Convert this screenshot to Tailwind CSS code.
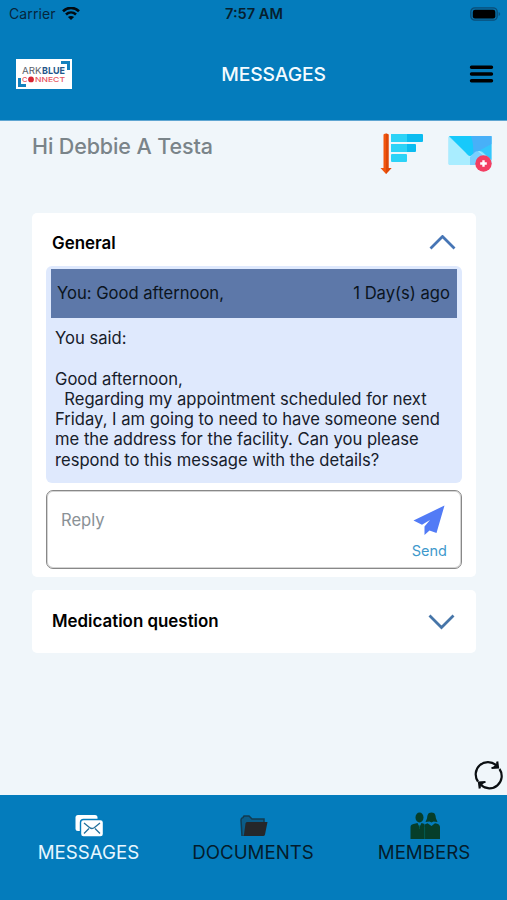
<!DOCTYPE html>
<html lang="en">
<head>
    <meta charset="UTF-8">
    <meta name="viewport" content="width=device-width, initial-scale=1.0">
    <title>Messages</title>
    <script src="https://cdn.jsdelivr.net/npm/@tailwindcss/browser@4"></script>
    <style>
        body {
            font-family: Inter, "Liberation Sans", sans-serif;
        }
    </style>
</head>
<body>
    <div class="flex h-[900px] w-[507px] flex-col overflow-hidden bg-[#f0f6fa] text-[#0b1420]">
        <header class="h-[121px] shrink-0 border-b border-[#5fa6d2] bg-[#047cbc]">
            <!-- Status bar -->
            <div class="grid h-7 grid-cols-3 items-center pl-[9px] pr-[8px] text-[14px] leading-7">
                <div class="flex items-center gap-[6px] text-[#06263c]">
                    <span class="tracking-[0.1px]">Carrier</span>
                    <svg class="h-[14px] w-[18px]" viewBox="0 0 18 14" fill="none" stroke="#020a10" stroke-width="2.6">
                        <path d="M1 4.2C5.6-.2 12.4-.2 17 4.2"/>
                        <path d="M4 7.500c2.900-2.700 7.100-2.700 10 0"/>
                        <path d="M9 13.100L5.900 10C7.600 8.500 10.400 8.500 12.100 10z" fill="#020a10" stroke="none"/>
                    </svg>
                </div>
                <span class="text-center text-[14.600px] font-semibold text-[#06202f]">7:57 AM</span>
                <svg class="mr-[-2px] h-[14px] w-[31px] justify-self-end" viewBox="0 0 31 14">
                    <rect x=".8" y=".8" width="26.400" height="12.400" rx="4" fill="#0772ac" stroke="#0a4e78" stroke-width="1.300"/>
                    <rect x="2.800" y="2.700" width="22.500" height="8.800" rx="2.200" fill="#000"/>
                    <path d="M28.600 5v4q1.600-.7 1.600-2t-1.600-2z" fill="#0a5480"/>
                </svg>
            </div>
            <!-- Title bar -->
            <div class="grid h-[92px] grid-cols-[56px_1fr_25px] items-center pl-[16px] pr-[13px]">
                <div class="relative h-[30px] w-[56px] bg-white">
                    <svg class="absolute inset-0 h-[30px] w-[56px]" viewBox="0 0 56 30" fill="#1481be">
                        <path d="M45 2h9v9h-3V5h-6z"/>
                        <path d="M2 19h3v6h5v3H2z"/>
                        <text x="6" y="14.800" font-size="9.600" textLength="19.500" lengthAdjust="spacingAndGlyphs" fill="#59616b">ARK</text>
                        <text x="26" y="14.800" font-size="9.600" font-weight="700" textLength="23" lengthAdjust="spacingAndGlyphs" fill="#22568a">BLUE</text>
                        <text x="6" y="23" font-size="6.600" font-weight="500" textLength="5.500" lengthAdjust="spacingAndGlyphs" fill="#e75560">C</text>
                        <circle cx="15" cy="20.400" r="2.900" fill="#d82432"/>
                        <text x="19" y="23" font-size="6.600" font-weight="500" textLength="30" lengthAdjust="spacingAndGlyphs" fill="#e75560">NNECT</text>
                    </svg>
                </div>
                <h1 class="pl-[6px] text-center text-[19.300px] font-medium leading-6 tracking-[-0.100px] text-[#f3fbff]">MESSAGES</h1>
                <svg class="h-[20px] w-[25px]" viewBox="0 0 25 20" stroke="#000" stroke-width="3.400" stroke-linecap="round">
                    <path d="M2.500 3.300h20M2.500 10h20M2.500 16.700h20"/>
                </svg>
            </div>
        </header>

        <main class="flex grow flex-col pl-8 pr-[31px]">
            <div class="mr-[-17px] flex h-[92px] items-start">
                <h2 class="mt-[11px] grow whitespace-nowrap text-[21.500px] font-medium leading-7 tracking-[-0.120px] text-[#7a8489]">Hi Debbie A Testa</h2>
                <svg class="mt-[12px] h-[42px] w-[44px]" viewBox="0 0 44 42">
                    <path d="M3.500 1.500Q6-.3 8.500 1.500V35h3L6 41 .5 35h3z" fill="#f1550d"/>
                    <path d="M6 .700Q7.500.5 8.500 1.500V35h3L6 41z" fill="#dd4709"/>
                    <rect x="11" y="1" width="32" height="8" rx="1" fill="#0bbcf0"/>
                    <rect x="11" y="11" width="25" height="8" rx="1" fill="#0bbcf0"/>
                    <path d="M12 1h15v8H12q-1 0-1-1V2q0-1 1-1zM12 11h15v8H12q-1 0-1-1v-6q0-1 1-1z" fill="#2cd3f7"/>
                    <rect x="11" y="21" width="16" height="8" rx="1" fill="#2cd3f7"/>
                </svg>
                <svg class="ml-[24px] mt-[14px] h-[38px] w-[45px]" viewBox="0 0 45 38">
                    <rect x=".5" y="1" width="43" height="29" rx="1.500" fill="#83e2ff"/>
                    <path d="M1 2l18 16L2 30H1z" fill="#a9edff"/>
                    <path d="M1 29.500L13 18q2-1.500 4 0l4 3 6-5q2-1.500 4 0l12 9v5H2z" fill="#a9edff"/>
                    <path d="M43.500 1v24l-9-8q-3-2-6 0L22 21z" fill="#34c6fb"/>
                    <path d="M1 1h42L24 20q-2 2-4 0z" fill="#17c9fb"/>
                    <path d="M23 1h20.500v8L25 19q1-9-2-18z" fill="#48b0f8"/>
                    <path d="M22 22l5-5q2-1.500 4 0l12 9v4H22z" fill="#79d0ff"/>
                    <circle cx="35.500" cy="28.500" r="8.200" fill="#f33e62"/>
                    <path d="M35.500 25.200v6.600M32.200 28.500h6.600" stroke="#fff" stroke-width="2.400"/>
                </svg>
            </div>

            <section class="h-[364px] rounded-[5px] bg-white px-[14px]">
                <div class="flex h-[53px] items-center justify-between pl-[6px] pr-[6px] pt-[7px]">
                    <h3 class="pt-[2px] text-[16.900px] font-semibold text-black">General</h3>
                    <svg class="h-[16px] w-[27px]" viewBox="0 0 27 16" fill="none" stroke="#4675b5" stroke-width="2.800">
                        <path d="M1.500 13.500l12-12 12 12"/>
                    </svg>
                </div>
                <div class="h-[217px] w-[416px] rounded-[6px] bg-[#dfe9fd] px-[5px] pt-[3px]">
                    <div class="flex h-[49px] items-center justify-between bg-[#5d78a9] pl-[6px] pr-[7px] pb-[1px] text-[16.600px]">
                        <span>You: Good afternoon,</span>
                        <span>1 Day(s) ago</span>
                    </div>
                    <div class="whitespace-pre pl-[4px] pt-[10px] text-[16.600px] leading-[20.300px] text-[#17202b]"><p>You said:</p><p>&nbsp;</p><p>Good afternoon,</p><p>  Regarding my appointment scheduled for next</p><p>Friday, I am going to need to have someone send</p><p>me the address for the facility. Can you please</p><p>respond to this message with the details?</p></div>
                </div>
                <div class="mt-[7px] flex h-[79px] w-[416px] justify-between rounded-[7px] border border-[#888] pl-[14px] pr-[14px] ring-1 ring-inset ring-[#d4d4d4]">
                    <span class="mt-[17px] text-[16.600px] leading-6 text-[#8a9196]">Reply</span>
                    <div class="flex flex-col items-center pt-[14px]">
                        <svg class="h-[31px] w-[32px]" viewBox="0 0 32 31" fill="#527bf6">
                            <path d="M31.500.5L.5 15.500l8.500 4.300L17 15l-5.500 6.500V30l5-4.500 7 2.500z"/>
                        </svg>
                        <span class="mt-[5px] text-[14.500px] leading-5 text-[#3e99cc]">Send</span>
                    </div>
                </div>
            </section>

            <section class="mt-[13px] flex h-[63px] items-center justify-between rounded-[5px] bg-white pl-[20px] pr-[21px]">
                <h3 class="text-[16.900px] font-semibold text-black">Medication question</h3>
                <svg class="h-[16px] w-[27px]" viewBox="0 0 27 16" fill="none" stroke="#4675a8" stroke-width="2.800">
                    <path d="M1.500 1.500l12 12 12-12"/>
                </svg>
            </section>

            <!-- Refresh -->
            <svg class="mb-[5px] mr-[-27px] mt-auto h-[30px] w-[29px] self-end" viewBox="0 0 29 30" fill="none" stroke="#0b0f12" stroke-width="2.200">
                <path d="M4 21.500A12.300 12.300 0 0 1 22 5"/>
                <path d="M25.500 9A12.300 12.300 0 0 1 7 25"/>
                <path d="M17.500 8l6.500-.5-.8-6M11.500 22l-6.500.5.8 6"/>
                <path d="M23.500 2.500v5h-5zM5.500 27.500v-5h5z" fill="#0b0f12" stroke="none"/>
            </svg>
        </main>

        <nav class="grid h-[105px] shrink-0 grid-cols-[177px_152px_178px] bg-[#047cbc] pt-[16px] text-[18.700px] leading-6">
            <div class="flex flex-col items-center text-[#e8f7ff]">
                <svg class="mb-[1px] h-[29px] w-[30px]" viewBox="0 0 30 29">
                    <rect x="1.500" y="4" width="22" height="16" rx="2.500" fill="#fff"/>
                    <rect x="6.500" y="8.500" width="23" height="17.500" rx="3" fill="#fff" stroke="#047cbc" stroke-width="1.400"/>
                    <path d="M10 12l5.500 4.500q2.500 2 5 0L26 12M10 22.500l5-5M26 22.500l-5-5" fill="none" stroke="#24719c" stroke-width="1.300"/>
                </svg>
                <span>MESSAGES</span>
            </div>
            <div class="flex flex-col items-center text-[#041c2c]">
                <svg class="mb-[1px] ml-[2px] h-[29px] w-[30px]" viewBox="0 0 30 29">
                    <path d="M3 25L2 9q0-2 2-2.500L5 5h5l3 3h12v4" fill="#0b5c88" stroke="#123b50" stroke-width="1.500"/>
                    <path d="M8 11h20.500L26 23.500q-.3 1.500-2 1.500H3q1.500 0 2-1.500l1.500-11Q6.700 11 8 11z" fill="#25272a"/>
                </svg>
                <span>DOCUMENTS</span>
            </div>
            <div class="flex flex-col items-center pl-[12px] text-[#041c2c]">
                <svg class="mb-[1px] ml-[2px] h-[29px] w-[32px]" viewBox="0 0 32 29" fill="#063e2a">
                    <ellipse cx="10.500" cy="6.500" rx="4" ry="5"/>
                    <path d="M1.500 28V16q0-2.500 3-3l4-1 2 4 2-4 3 1v15z"/>
                    <path d="M22.500 1.500c4 0 4 3 4.500 6l1.500 3.500-4-.5-2 1-2-1-4 .5L18 7.500c.5-3 .5-6 4.500-6z"/>
                    <path d="M15.500 28V14.500q0-1.500 3-2.300l4 2.800 3.500-2.800q5 .8 5 3.800v12z"/>
                    <path d="M10.500 14v4M15.700 16v12" stroke="#04654f" stroke-width=".6"/>
                </svg>
                <span>MEMBERS</span>
            </div>
        </nav>
    </div>
</body>
</html>
